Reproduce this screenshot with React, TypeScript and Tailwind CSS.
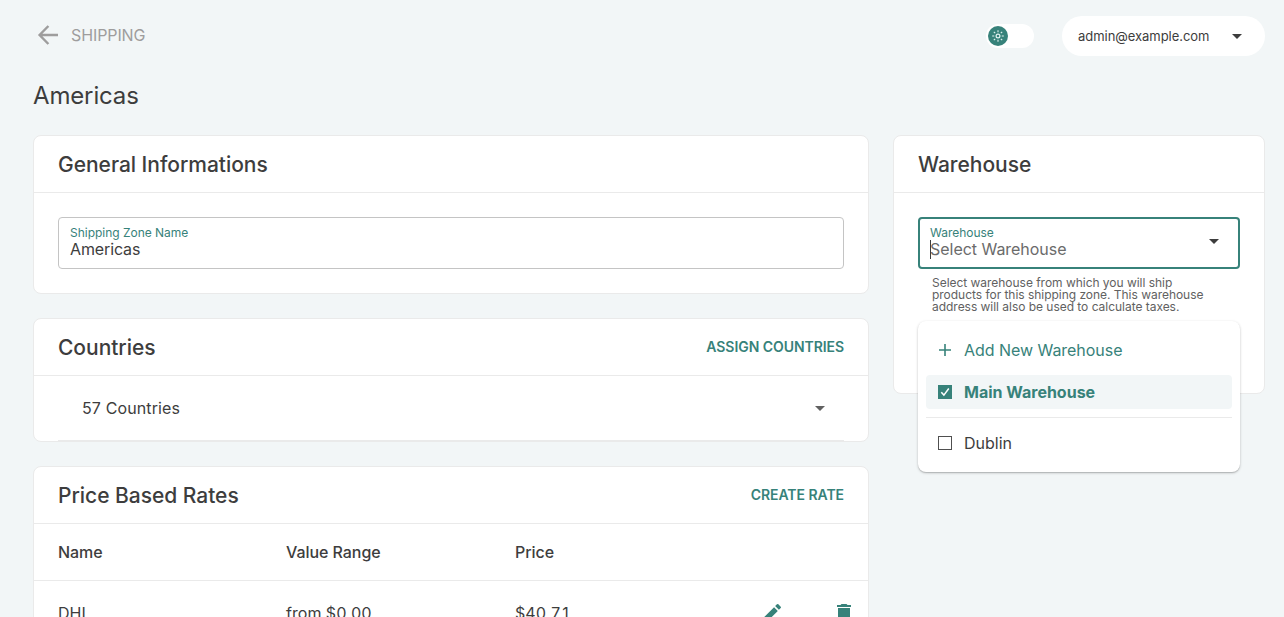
import type { ReactNode } from "react";

function Card({ title, action, children, className = "" }: { title: string; action?: string; children?: ReactNode; className?: string }) {
  return (
    <section className={`rounded-lg border border-[#eaeaea] bg-white ${className}`}>
      <header className="flex h-[57px] items-center justify-between border-b border-[#eaeaea] px-6">
        <h2 className="pt-[2px] text-[21px] leading-7 font-medium tracking-[-0.03px]">{title}</h2>
        {action && (
          <button className="text-sm font-semibold tracking-[-0.06px] text-[#37827a]">{action}</button>
        )}
      </header>
      {children}
    </section>
  );
}

function Caret({ className = "" }: { className?: string }) {
  return (
    <svg viewBox="0 0 24 24" className={`h-6 w-6 shrink-0 ${className}`} fill="currentColor">
      <path d="M7 10l5 5 5-5z" />
    </svg>
  );
}

function TopBar() {
  return (
    <div className="flex h-[72px] items-center justify-between">
      <a className="flex items-center gap-2 pb-[2px] pl-[2px] text-[#9e9d9d]">
        <svg viewBox="0 0 28 24" className="h-6 w-7" fill="none" stroke="currentColor" strokeWidth="2.4">
          <path d="M23 12H4.6M13.4 3L4.6 12l8.8 9" />
        </svg>
        <span className="text-base tracking-[-0.1px]">SHIPPING</span>
      </a>
      <div className="flex items-center gap-7">
        <div className="flex h-6 w-12 items-center rounded-full bg-white pl-[2px]">
          <span className="flex h-5 w-5 items-center justify-center rounded-full bg-[#37827a]">
            <svg viewBox="0 0 12 12" className="h-3 w-3" fill="none" stroke="#e3f3f1">
              <circle cx="6" cy="6" r="1.9" strokeWidth="1.2" />
              <path
                d="M6 .2v2.1M6 9.7v2.1M.2 6h2.1M9.7 6h2.1M1.8 1.8l1.4 1.4M8.8 8.8l1.4 1.4M1.8 10.2l1.4-1.4M8.8 3.2l1.4-1.4"
                strokeWidth="1.1"
              />
            </svg>
          </span>
        </div>
        <button className="flex h-10 w-[203px] items-center justify-between rounded-full bg-white pr-4 pl-4">
          <span className="pt-[2px] text-[13px] tracking-[-0.04px]">admin@example.com</span>
          <Caret />
        </button>
      </div>
    </div>
  );
}

function Checkbox({ checked = false }: { checked?: boolean }) {
  return (
    <svg viewBox="0 0 14 14" className="h-3.5 w-3.5 shrink-0" fill="none">
      {checked ? (
        <>
          <rect width="14" height="14" fill="#37827a" />
          <path d="M3.3 7.2l2.6 2.9 4.9-6.6" stroke="white" strokeWidth="1.5" />
        </>
      ) : (
        <rect x=".5" y=".5" width="13" height="13" stroke="#4f4f4f" />
      )}
    </svg>
  );
}

function WarehouseMenu() {
  return (
    <div className="absolute top-[128px] left-6 flex w-[322px] flex-col rounded-lg bg-white p-2 pt-3 pb-3 shadow-[0_1px_3px_rgba(0,0,0,0.2),0_1px_1px_rgba(0,0,0,0.14)]">
      <div className="flex h-[34px] items-center gap-3 pl-3 text-[#37827a]">
        <svg viewBox="0 0 14 14" className="h-3.5 w-3.5" stroke="currentColor" strokeWidth="1.6">
          <path d="M7 1v12M1 7h12" />
        </svg>
        <span className="text-base tracking-[-0.04px]">Add New Warehouse</span>
      </div>
      <div className="mt-2 flex h-[34px] items-center gap-3 rounded bg-[#f2f6f7] pl-3 text-[#37827a]">
        <Checkbox checked />
        <span className="text-base font-bold">Main Warehouse</span>
      </div>
      <hr className="my-2 border-[#eaeaea]" />
      <div className="flex h-[34px] items-center gap-3 pl-3">
        <Checkbox />
        <span className="text-base">Dublin</span>
      </div>
    </div>
  );
}

export default function App() {
  return (
    <main className="h-[617px] overflow-hidden bg-[#f2f6f7] pr-[19px] pl-[33px] font-['Inter',sans-serif] text-[#3d3d3d]">
      <TopBar />
      <h1 className="h-[63px] pt-[6px] text-2xl leading-9 tracking-[-0.15px]">Americas</h1>
      <div className="grid grid-cols-[836px_372px] gap-6">
        <div className="flex flex-col gap-6">
          <Card title="General Informations" className="h-[159px]">
            <div className="mx-6 mt-6 flex h-[52px] flex-col rounded border border-[#c4c4c4] px-[11px] pt-[7px]">
              <label className="text-xs leading-[15px] tracking-[-0.02px] text-[#37827a]">Shipping Zone Name</label>
              <span className="text-base leading-[18px] tracking-[-0.12px]">Americas</span>
            </div>
          </Card>
          <Card title="Countries" action="ASSIGN COUNTRIES" className="h-[124px]">
            <div className="mx-6 flex h-[65px] items-center justify-between border-b border-[#eaeaea] pr-3 pl-6">
              <span className="text-base tracking-[0.12px]">57 Countries</span>
              <Caret className="text-[#616161]" />
            </div>
          </Card>
          <Card title="Price Based Rates" action="CREATE RATE" className="h-[240px]">
            <div className="grid h-[57px] grid-cols-[228px_229px_1fr] items-center border-b border-[#eaeaea] px-6 font-medium tracking-[-0.05px]">
              <span>Name</span>
              <span>Value Range</span>
              <span>Price</span>
            </div>
            <div className="grid h-16 grid-cols-[228px_229px_245px_1fr] items-center pl-6 tracking-[0.05px] tabular-nums">
              <span>DHL</span>
              <span>from $0.00</span>
              <span>$40.71</span>
              <span className="flex gap-12 text-[#37827a]">
                <svg viewBox="0 0 24 24" className="h-6 w-6" fill="currentColor">
                  <path d="M3 17.25V21h3.75L17.81 9.94l-3.75-3.75L3 17.25zM20.71 7.04a1 1 0 0 0 0-1.41l-2.34-2.34a1 1 0 0 0-1.41 0l-1.83 1.83 3.75 3.75 1.83-1.83z" />
                </svg>
                <svg viewBox="0 0 24 24" className="h-6 w-6" fill="currentColor">
                  <path d="M6 19c0 1.1.9 2 2 2h8c1.1 0 2-.9 2-2V7H6v12zM19 4h-3.5l-1-1h-5l-1 1H5v2h14V4z" />
                </svg>
              </span>
            </div>
          </Card>
        </div>
        <Card title="Warehouse" className="h-[259px]">
          <div className="relative px-6 pt-6">
            <div className="flex h-[52px] items-center justify-between rounded border-2 border-[#37827a] pr-3 pb-1 pl-[10px]">
              <div className="flex flex-col">
                <label className="text-xs leading-[15px] tracking-[-0.02px] text-[#37827a]">Warehouse</label>
                <span className="relative text-base leading-[18px] tracking-[-0.03px] text-[#6b6b6b]">
                  <i className="absolute top-0 left-0 h-[19px] w-px bg-[#3d3d3d]" />
                  Select Warehouse
                </span>
              </div>
              <Caret />
            </div>
            <p className="mt-2 ml-[14px] w-[290px] text-xs leading-3 tracking-[-0.03px] text-[#616161]">
              Select warehouse from which you will ship
              <br />
              products for this shipping zone. This warehouse
              <br />
              address will also be used to calculate taxes.
            </p>
            <WarehouseMenu />
          </div>
        </Card>
      </div>
    </main>
  );
}
